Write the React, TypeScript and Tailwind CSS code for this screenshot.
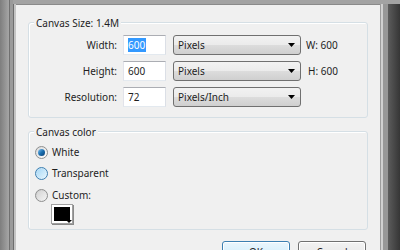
import React from "react";

function Radio({ state }: { state: "checked" | "hover" | "off" }) {
  if (state === "checked") {
    return (
      <span className="flex h-[13px] w-[13px] shrink-0 items-center justify-center rounded-full border border-[#8e8f8f] bg-gradient-to-br from-[#d8d8d8] to-[#ffffff]">
        <span className="h-[7px] w-[7px] rounded-full bg-gradient-to-br from-[#7ec3f0] via-[#1a6fb0] to-[#0d3f73]" />
      </span>
    );
  }
  if (state === "hover") {
    return (
      <span className="flex h-[13px] w-[13px] shrink-0 items-center justify-center rounded-full border border-[#3c7fb1] bg-gradient-to-br from-[#b6dbf3] to-[#eaf6fd]">
        <span className="h-[9px] w-[9px] rounded-full bg-gradient-to-br from-[#a8d8f6] to-[#e3f4fc]" />
      </span>
    );
  }
  return (
    <span className="flex h-[13px] w-[13px] shrink-0 items-center justify-center rounded-full border border-[#8e8f8f] bg-gradient-to-br from-[#c9c9c9] to-[#f6f6f6]">
      <span className="h-[9px] w-[9px] rounded-full bg-gradient-to-br from-[#d4d4d4] to-[#f2f2f2]" />
    </span>
  );
}

function Select({ value }: { value: string }) {
  return (
    <div className="flex h-[20px] w-[128px] items-center justify-between rounded-[3px] border border-[#707070] bg-[linear-gradient(#f2f2f2,#ebebeb_50%,#dddddd_50%,#cfcfcf)] pl-[4px] pr-[5px]">
      <span>{value}</span>
      <svg width="7" height="4" viewBox="0 0 7 4">
        <path d="M0 0h7L3.5 4z" fill="#000" />
      </svg>
    </div>
  );
}

function Field({ value, selected }: { value: string; selected?: boolean }) {
  return (
    <div className="flex h-[20px] w-[43px] items-center border border-[#abadb3] border-b-[#e3e9ef] border-l-[#e2e3ea] border-r-[#dbdfe6] bg-white pl-[4px]">
      {selected ? (
        <span className="bg-[#3399ff] pr-[1px] leading-[14px] text-white">{value}</span>
      ) : (
        <span>{value}</span>
      )}
    </div>
  );
}

const rows = [
  { label: "Width:", value: "600", unit: "Pixels", info: "W: 600", selected: true },
  { label: "Height:", value: "600", unit: "Pixels", info: "H: 600" },
  { label: "Resolution:", value: "72", unit: "Pixels/Inch", info: "" },
];

export default function App() {
  return (
    <div
      className="flex h-[250px] w-[400px] overflow-hidden bg-[#a3a3a3] text-[10px] text-[#1e1e1e]"
      style={{ fontFamily: '"Noto Sans", "Liberation Sans", sans-serif' }}
    >
      {/* left frame */}
      <div className="flex w-[16px] shrink-0">
        <div className="w-[9px] bg-gradient-to-r from-[#7e7e7e] to-[#a6a6a6]" />
        <div className="w-[4px] border-l border-[#707070] bg-[#9a9a9a]" />
        <div className="mt-[4px] w-[3px] border-l border-[#6d6d6d] bg-[#c4c4c4]" />
      </div>

      {/* dialog */}
      <div className="mt-[4px] flex w-[364px] shrink-0 flex-col border-t border-[#8a8a8a] bg-[#f0f0f0]">
        <div className="relative mx-[12px] mt-[17px] h-[96px] shrink-0 rounded-[3px] border border-[#d5dfe5] shadow-[inset_1px_1px_0_#ffffff]">
          <span className="absolute -top-[8px] left-[5px] bg-[#f0f0f0] px-[2px] leading-[16px]">Canvas Size: 1.4M</span>
          <div className="mt-[12px] flex flex-col gap-[6px]">
            {rows.map((r) => (
              <div key={r.label} className="flex h-[20px] items-center">
                <span className="w-[88px] shrink-0 text-right">{r.label}</span>
                <div className="ml-[6px]">
                  <Field value={r.value} selected={r.selected} />
                </div>
                <div className="ml-[7px]">
                  <Select value={r.unit} />
                </div>
                <span className={r.info.startsWith("H") ? "ml-[7px]" : "ml-[5px]"}>{r.info}</span>
              </div>
            ))}
          </div>
        </div>

        <div className="relative mx-[12px] mt-[13px] h-[99px] shrink-0 rounded-[3px] border border-[#d5dfe5] shadow-[inset_1px_1px_0_#ffffff]">
          <span className="absolute -top-[8px] left-[5px] bg-[#f0f0f0] px-[2px] leading-[16px]">Canvas color</span>
          <div className="ml-[6px] mt-[13px] flex flex-col gap-[7.5px]">
            <label className="flex h-[14px] items-center gap-[4px]">
              <Radio state="checked" />
              <span>White</span>
            </label>
            <label className="flex h-[14px] items-center gap-[4px]">
              <Radio state="hover" />
              <span>Transparent</span>
            </label>
            <label className="flex h-[14px] items-center gap-[4px]">
              <Radio state="off" />
              <span>Custom:</span>
            </label>
          </div>
          <div className="relative ml-[22px] mt-[2px] h-[20px] w-[22px] border border-[#a0a0a0] bg-white p-[2px] shadow-[1px_1px_0_#8a8a8a]">
            <div className="h-full w-full bg-black" />
            <svg className="absolute bottom-[-1px] right-[0px]" width="6" height="4" viewBox="0 0 6 4">
              <path d="M0 0h6L3 3z" fill="#000" />
            </svg>
          </div>
        </div>

        <div className="mr-[14px] mt-[11px] flex shrink-0 justify-end gap-[8px]">
          <button className="h-[23px] w-[68px] rounded-[3px] border border-[#3c7fb1] bg-[linear-gradient(#eaf6fd,#d9f0fc_50%,#bee6fd_50%,#a7d9f5)] shadow-[inset_0_0_0_1px_#ffffff]">
            OK
          </button>
          <button className="h-[23px] w-[68px] rounded-[3px] border border-[#707070] bg-[linear-gradient(#f2f2f2,#ebebeb_50%,#dddddd_50%,#cfcfcf)] shadow-[inset_0_0_0_1px_#ffffff]">
            Cancel
          </button>
        </div>
      </div>

      {/* right frame */}
      <div className="mt-[4px] flex flex-1">
        <div className="w-[3px] border-l border-[#9c9c9c] bg-[#d0d0d0]" />
        <div className="w-[5px] bg-[#979797]" />
        <div className="flex-1 bg-gradient-to-r from-[#5c5c5c] to-[#363636]" />
      </div>
    </div>
  );
}
